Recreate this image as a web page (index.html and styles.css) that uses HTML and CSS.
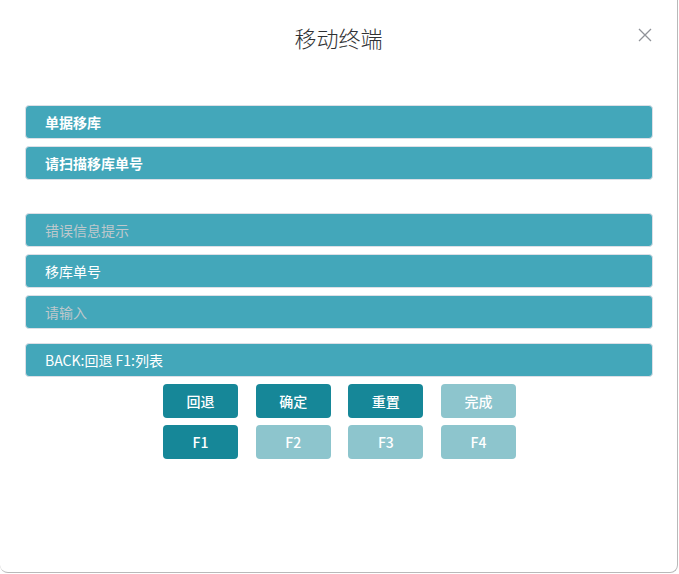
FILE: index.html
```html
<!DOCTYPE html>
<html lang="zh-CN">
<head>
<meta charset="utf-8">
<title>移动终端</title>
<link rel="stylesheet" href="styles.css">
</head>
<body>
<div class="dialog">
  <div class="header">
    <span class="title">移动终端</span>
    <button class="close" aria-label="关闭">
      <svg width="14" height="14" viewBox="0 0 14 14"><path d="M1 1 L13 13 M13 1 L1 13" stroke="#909399" stroke-width="1.3" fill="none"/></svg>
    </button>
  </div>
  <div class="body">
    <div class="bar strong">单据移库</div>
    <div class="bar strong">请扫描移库单号</div>
    <div class="bar placeholder group-gap">错误信息提示</div>
    <div class="bar">移库单号</div>
    <div class="bar placeholder">请输入</div>
    <div class="bar hint-gap">BACK:回退 F1:列表</div>
    <div class="btns">
      <button class="btn">回退</button>
      <button class="btn">确定</button>
      <button class="btn">重置</button>
      <button class="btn light">完成</button>
      <button class="btn">F1</button>
      <button class="btn light">F2</button>
      <button class="btn light">F3</button>
      <button class="btn light">F4</button>
    </div>
  </div>
</div>
</body>
</html>
```
FILE: styles.css
```css
html, body {
  margin: 0;
  padding: 0;
  background: #ffffff;
}
body {
  font-family: "Noto Sans CJK SC", "Noto Sans", "Liberation Sans", sans-serif;
  width: 679px;
  height: 574px;
  overflow: hidden;
}
.dialog {
  position: relative;
  width: 677px;
  height: 572px;
  background: #fff;
  border-right: 1px solid #b9b9b9;
  border-bottom: 1px solid #b9b9b9;
  border-radius: 0 0 8px 8px;
  box-sizing: content-box;
}
.header {
  position: relative;
  height: 105px;
  box-sizing: border-box;
  padding-top: 22px;
  text-align: center;
}
.title {
  font-size: 22px;
  font-weight: 300;
  line-height: 30px;
  color: #303133;
}
.close {
  position: absolute;
  top: 28px;
  right: 25px;
  width: 14px;
  height: 14px;
  padding: 0;
  border: none;
  background: transparent;
  display: flex;
}
.body {
  display: flex;
  flex-direction: column;
  gap: 7px;
  padding: 0 24px 0 25px;
}
.bar {
  height: 34px;
  box-sizing: border-box;
  border: 1px solid #dcdfe6;
  border-radius: 4px;
  background: #43a7ba;
  color: #ffffff;
  font-size: 14px;
  line-height: 32px;
  padding-left: 19px;
}
.strong {
  font-weight: 600;
}
.placeholder {
  color: #bfc8cc;
}
.group-gap {
  margin-top: 26px;
}
.hint-gap {
  margin-top: 7px;
}
.btns {
  display: grid;
  grid-template-columns: repeat(4, 75px);
  column-gap: 17.7px;
  row-gap: 7px;
  justify-content: center;
  padding-left: 1px;
}
.btn {
  height: 34px;
  border: none;
  border-radius: 4px;
  background: #168798;
  color: #ffffff;
  font-family: "Noto Sans CJK SC", "Noto Sans", "Liberation Sans", sans-serif;
  font-size: 14px;
  font-weight: 500;
  padding: 0;
}
.btn.light {
  background: #8dc5cd;
}
```
